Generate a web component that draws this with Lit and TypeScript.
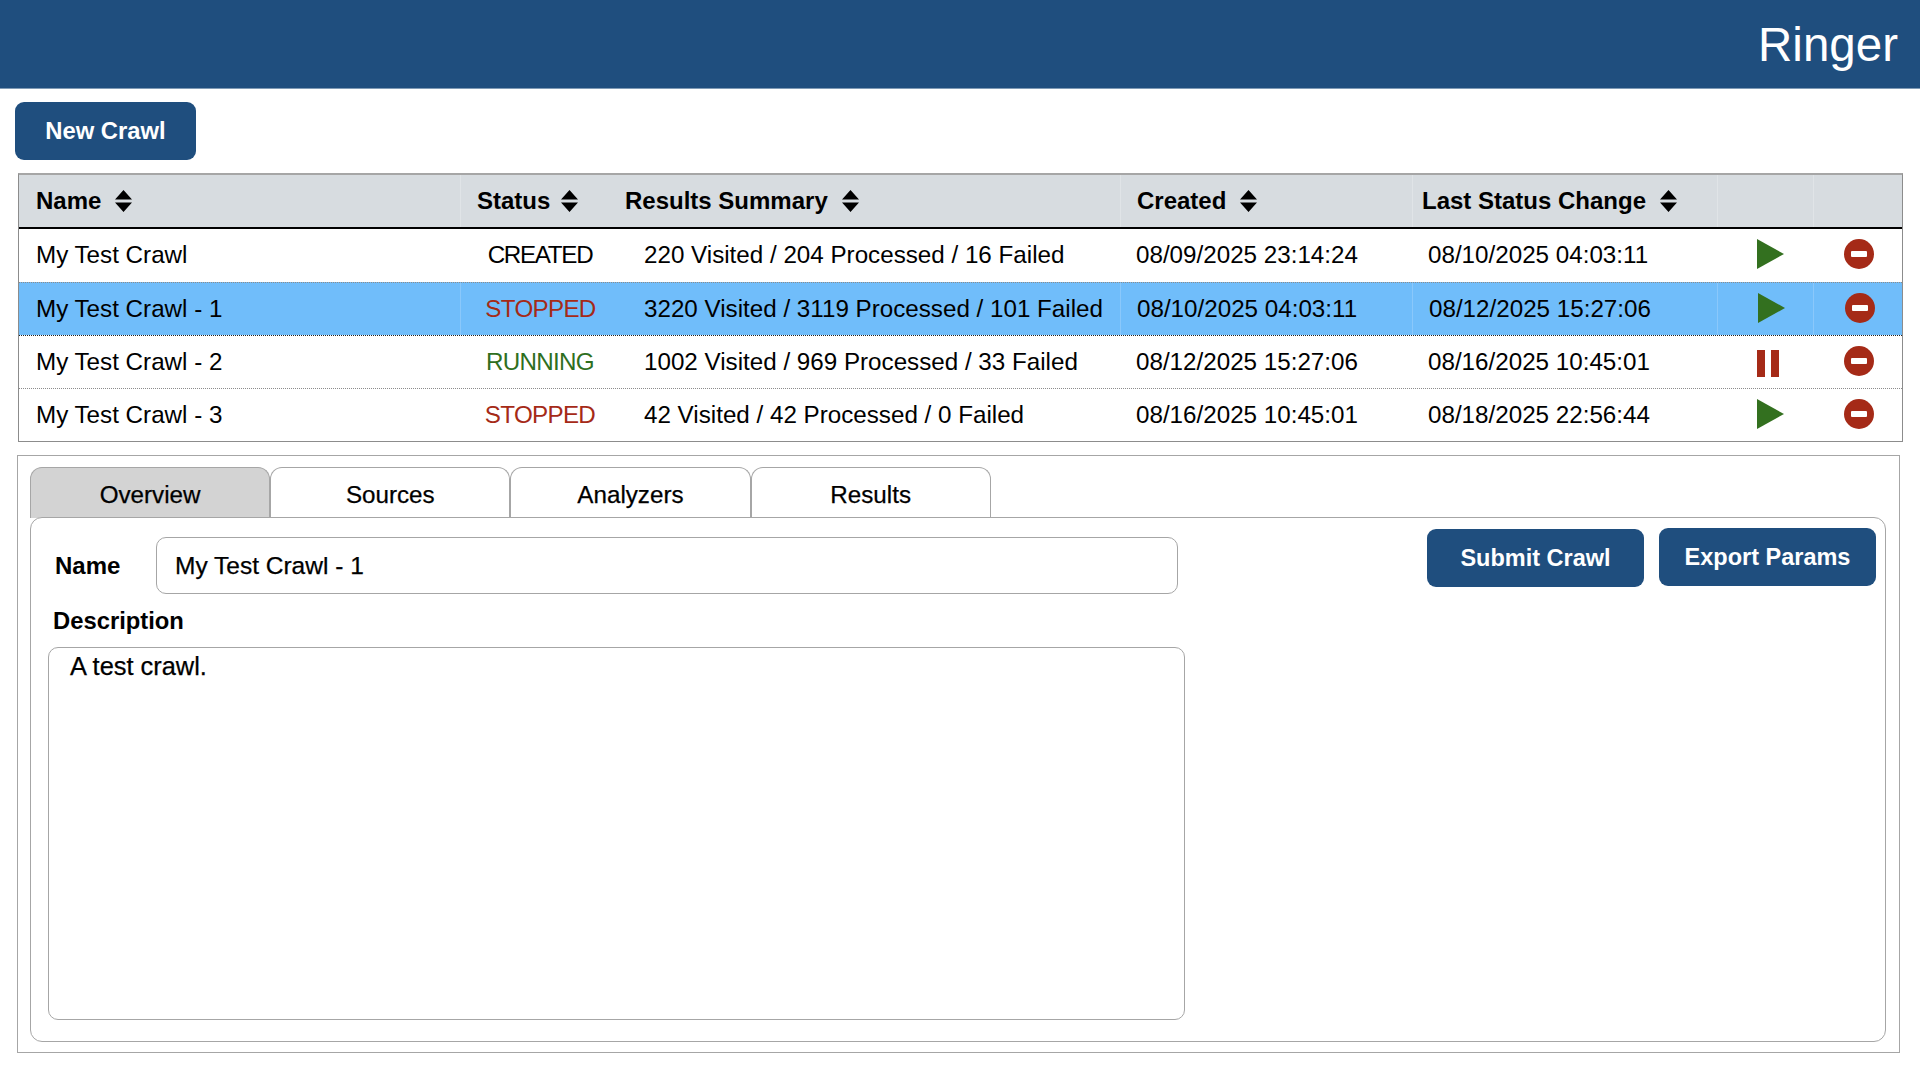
import { LitElement, html, css, svg } from "lit";
import { customElement, state } from "lit/decorators.js";
import { classMap } from "lit/directives/class-map.js";

type Status = "CREATED" | "STOPPED" | "RUNNING";

interface Crawl {
  name: string;
  status: Status;
  summary: string;
  created: string;
  changed: string;
}

const CRAWLS: Crawl[] = [
  { name: "My Test Crawl", status: "CREATED", summary: "220 Visited / 204 Processed / 16 Failed", created: "08/09/2025 23:14:24", changed: "08/10/2025 04:03:11" },
  { name: "My Test Crawl - 1", status: "STOPPED", summary: "3220 Visited / 3119 Processed / 101 Failed", created: "08/10/2025 04:03:11", changed: "08/12/2025 15:27:06" },
  { name: "My Test Crawl - 2", status: "RUNNING", summary: "1002 Visited / 969 Processed / 33 Failed", created: "08/12/2025 15:27:06", changed: "08/16/2025 10:45:01" },
  { name: "My Test Crawl - 3", status: "STOPPED", summary: "42 Visited / 42 Processed / 0 Failed", created: "08/16/2025 10:45:01", changed: "08/18/2025 22:56:44" },
];

const TABS = ["Overview", "Sources", "Analyzers", "Results"];

const sortIcon = svg`<svg class="sort" width="17" height="22" viewBox="0 0 17 22"><path d="M8.5 0 17 9.5H0Z M0 12.5H17L8.5 22Z" fill="#000"/></svg>`;
const playIcon = svg`<svg class="act" width="27" height="30" viewBox="0 0 27 30"><path d="M0 0 27 15 0 30Z" fill="#33701f"/></svg>`;
const pauseIcon = svg`<svg class="act pause" width="22" height="27" viewBox="0 0 22 27"><path d="M0 0H8V27H0Z M14 0H22V27H14Z" fill="#a52a17"/></svg>`;
const removeIcon = svg`<svg class="act" width="30" height="30" viewBox="0 0 30 30"><circle cx="15" cy="15" r="15" fill="#a52a17"/><rect x="7" y="12" width="16" height="6" rx="1" fill="#fff"/></svg>`;

@customElement("app-root")
export class AppRoot extends LitElement {
  @state() selected = 1;
  @state() tab = "Overview";

  static styles = css`
    :host {
      display: block;
      width: 1920px;
      height: 1080px;
      background: #fff;
      color: #000;
      font-family: "Liberation Sans", Arial, sans-serif;
      font-size: 24.2px;
      overflow: hidden;
    }
    * { box-sizing: border-box; }
    .header {
      height: 89px;
      background: #1f4e7e;
      border-bottom: 1px solid #7f9ab5;
      color: #fff;
      font-size: 47.5px;
      line-height: 90px;
      text-align: right;
      padding-right: 22px;
    }
    .btn {
      display: flex;
      align-items: center;
      justify-content: center;
      height: 58px;
      background: #1f4e7e;
      color: #fff;
      border: none;
      border-radius: 9px;
      font: bold 23.5px "Liberation Sans", Arial, sans-serif;
    }
    .toolbar { padding: 13px 0 0 15px; }
    .toolbar .btn { width: 181px; font-size: 23.8px; }
    .table {
      margin: 13px 0 0 18px;
      width: 1885px;
      border: 1px solid #8c8c8c;
      border-top: 2px solid #a6a6a6;
    }
    .row {
      display: grid;
      grid-template-columns: 441px 160px 500px 292px 305px 96px 1fr;
      height: 53.2px;
      align-items: stretch;
    }
    .row + .row { border-top: 1px dotted #8c8c8c; }
    .row.on + .row { border-top-color: #222; }
    .row.head {
      height: 53.5px;
      background: #d7dce0;
      border-bottom: 2px solid #000;
      font-weight: bold;
      font-size: 24px;
    }
    .row.head + .row { border-top: none; }
    .row.on { background: #70bdfa; }
    .row.head .cell.line { border-left: 1px solid #e0e4e7; }
    .row.on .cell.line { border-left: 1px solid #8ac8fb; }
    .cell {
      display: flex;
      align-items: center;
      white-space: nowrap;
      padding-left: 17px;
    }
    .cell.status { justify-content: center; padding: 0; letter-spacing: -0.7px; }
    .cell.status.CREATED { letter-spacing: -1.3px; }
    .cell.sum { padding-left: 24px; }
    .cell.date { padding-left: 16px; }
    .cell.action { padding-left: 40px; }
    .cell.remove { padding-left: 31px; }
    .head .cell.status { justify-content: flex-start; padding-left: 16px; letter-spacing: 0; }
    .head .cell.status .sort { margin-left: 11px; }
    .head .cell.sum { padding-left: 5px; }
    .head .cell.changed { padding-left: 9px; }
    .sort { margin-left: 14px; }
    .STOPPED { color: #a52a17; }
    .RUNNING { color: #2f6f1e; }
    .act { margin-top: -2px; }
    .act.pause { margin-top: 3px; }
    .panel {
      margin: 13px 0 0 17px;
      width: 1883px;
      height: 598px;
      border: 1px solid #a6a6a6;
      padding: 11px 12px 0;
    }
    .tabs { display: flex; height: 51px; }
    .tab {
      width: 240.2px;
      display: flex;
      align-items: center;
      justify-content: center;
      padding-top: 4px;
      border: 1px solid #a6a6a6;
      border-bottom: none;
      border-radius: 12px 12px 0 0;
      background: #fff;
      -webkit-text-stroke: 0.25px #000;
    }
    .tab.active { background: #d3d3d3; }
    .body {
      width: 1856px;
      height: 525px;
      border: 1px solid #a6a6a6;
      border-radius: 12px;
      margin-top: -1px;
      background: #fff;
      position: relative;
      display: grid;
      grid-template-columns: 1fr auto;
      padding: 11px 9px 0 17px;
    }
    .form { width: 1140px; }
    .name-row {
      display: flex;
      align-items: center;
      padding-top: 8px;
      font-weight: bold;
    }
    .name-row label { width: 108px; padding-left: 7px; font-size: 24px; }
    .input {
      width: 1022px;
      height: 57px;
      border: 1px solid #a6a6a6;
      border-radius: 10px;
      display: flex;
      align-items: center;
      padding: 0 18px;
      font-weight: normal;
      font-size: 24.5px;
      -webkit-text-stroke: 0.25px #000;
    }
    .desc-label {
      font-weight: bold;
      font-size: 23.8px;
      padding: 13px 0 0 5px;
      line-height: 28px;
    }
    .textarea {
      width: 1137px;
      height: 373px;
      margin-top: 12px;
      border: 1px solid #a6a6a6;
      border-radius: 10px;
      padding: 4px 21px;
      font-size: 25.4px;
      -webkit-text-stroke: 0.25px #000;
    }
    .actions { display: flex; gap: 15px; align-items: flex-start; }
    .actions .btn { width: 217px; }
    .actions .btn + .btn { margin-top: -1px; }
  `;

  private renderRow(c: Crawl, i: number) {
    return html`
      <div class=${classMap({ row: true, on: i === this.selected })} @click=${() => (this.selected = i)}>
        <div class="cell">${c.name}</div>
        <div class="cell line status ${c.status}">${c.status}</div>
        <div class="cell sum">${c.summary}</div>
        <div class="cell line date">${c.created}</div>
        <div class="cell line date">${c.changed}</div>
        <div class="cell line action">${c.status === "RUNNING" ? pauseIcon : playIcon}</div>
        <div class="cell line remove">${removeIcon}</div>
      </div>
    `;
  }

  render() {
    return html`
      <div class="header">Ringer</div>
      <div class="toolbar"><button class="btn">New Crawl</button></div>
      <div class="table">
        <div class="row head">
          <div class="cell">Name${sortIcon}</div>
          <div class="cell line status">Status${sortIcon}</div>
          <div class="cell sum">Results Summary${sortIcon}</div>
          <div class="cell line date">Created${sortIcon}</div>
          <div class="cell line date changed">Last Status Change${sortIcon}</div>
          <div class="cell line"></div>
          <div class="cell line"></div>
        </div>
        ${CRAWLS.map((c, i) => this.renderRow(c, i))}
      </div>
      <div class="panel">
        <div class="tabs">
          ${TABS.map(
            (t) => html`<div class=${classMap({ tab: true, active: t === this.tab })} @click=${() => (this.tab = t)}>${t}</div>`
          )}
        </div>
        <div class="body">
          <div class="form">
            <div class="name-row">
              <label>Name</label>
              <div class="input">My Test Crawl - 1</div>
            </div>
            <div class="desc-label">Description</div>
            <div class="textarea">A test crawl.</div>
          </div>
          <div class="actions">
            <button class="btn">Submit Crawl</button>
            <button class="btn">Export Params</button>
          </div>
        </div>
      </div>
    `;
  }
}
